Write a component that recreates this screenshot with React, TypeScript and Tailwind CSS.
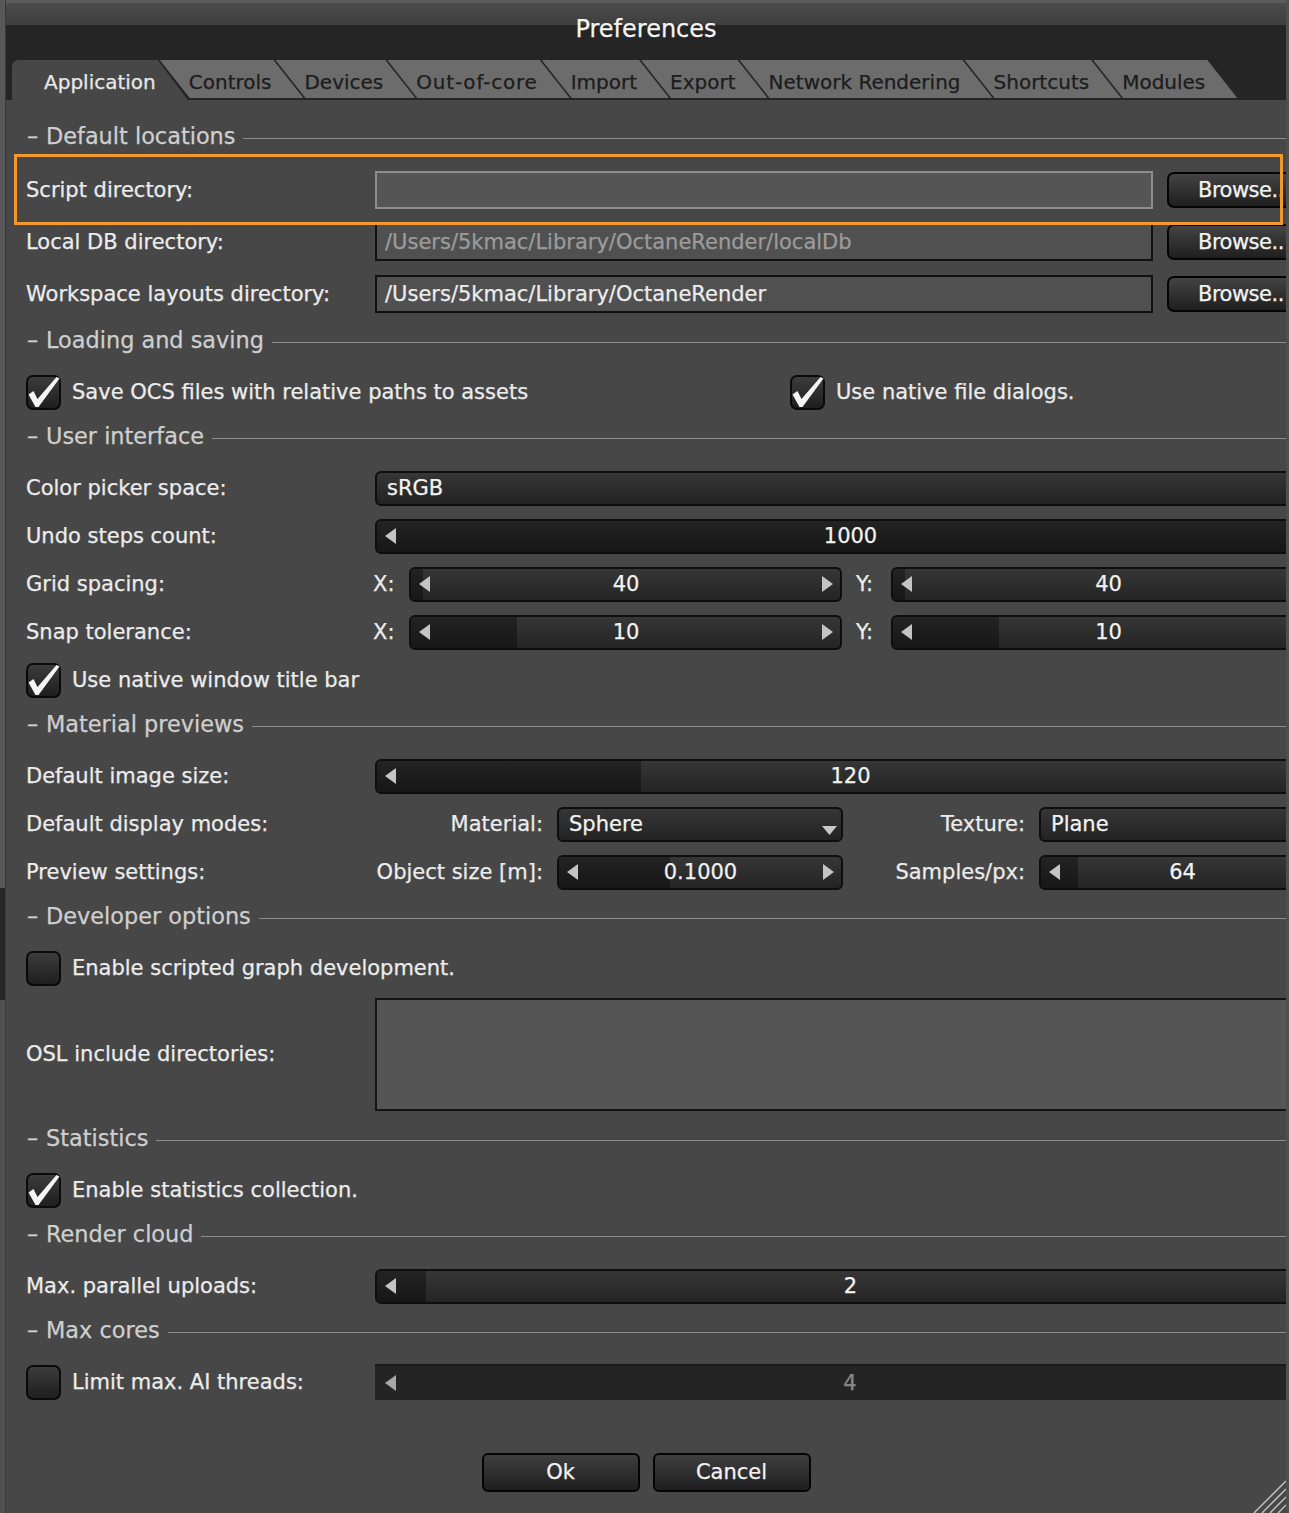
import React from 'react'

const tabs = ['Application', 'Controls', 'Devices', 'Out-of-core', 'Import', 'Export', 'Network Rendering', 'Shortcuts', 'Modules']

function LeftArrow({ dim = false }: { dim?: boolean }) {
  return (
    <svg width="11" height="16" viewBox="0 0 11 16" className={dim ? 'shrink-0 fill-[#a8a8a8]' : 'shrink-0 fill-[#c4c4c4]'}>
      <polygon points="11,0 0,8 11,16" />
    </svg>
  )
}

function RightArrow() {
  return (
    <svg width="11" height="16" viewBox="0 0 11 16" className="shrink-0 fill-[#c4c4c4]">
      <polygon points="0,0 11,8 0,16" />
    </svg>
  )
}

function Slider({ value, fill, w }: { value: string; fill: number; w: string }) {
  return (
    <div className={`relative ${w} h-[35px] shrink-0 overflow-hidden rounded-[6px] border-2 border-[#0e0e0e] bg-linear-to-b from-[#373737] to-[#242424]`}>
      <div className="absolute inset-y-0 left-0 bg-linear-to-b from-[#232323] to-[#171717]" style={{ width: `${fill * 100}%` }} />
      <div className="relative flex h-full items-center pl-[8px] pr-[7px]">
        <LeftArrow />
        <span className="flex-1 text-center text-[#f2f2f2]">{value}</span>
        <RightArrow />
      </div>
    </div>
  )
}

function Dropdown({ value, w, arrow = false }: { value: string; w: string; arrow?: boolean }) {
  return (
    <div className={`relative ${w} h-[35px] shrink-0 rounded-[6px] border-2 border-[#0e0e0e] bg-linear-to-b from-[#363636] to-[#232323] pl-[10px] flex items-center text-[#f2f2f2]`}>
      {value}
      {arrow && (
        <svg width="15" height="9" viewBox="0 0 15 9" className="absolute bottom-[5px] right-[4px] fill-[#c8c8c8]">
          <polygon points="0,0 15,0 7.5,9" />
        </svg>
      )}
    </div>
  )
}

function Checkbox({ checked, label }: { checked: boolean; label: string }) {
  return (
    <div className="flex items-center">
      <div className="relative h-[35px] w-[35px] shrink-0 rounded-[7px] border-2 border-[#0a0a0a] bg-linear-to-b from-[#3c3c3c] to-[#1f1f1f]">
        {checked && (
          <svg width="35" height="35" viewBox="0 0 35 35" className="absolute -left-[2px] -top-[2px] overflow-visible fill-[#f4f4f4]">
            <path d="M2.5 19.5 L7.5 16 L11.5 24 L30.5 2 L33.5 3.5 L12.5 32 L9.5 32 Z" />
          </svg>
        )}
      </div>
      <span className="ml-[11px] text-[#ececec]">{label}</span>
    </div>
  )
}

function Section({ title }: { title: string }) {
  return (
    <div className="flex h-[40px] items-center text-[22.4px] text-[#cfcfcf]">
      <span className="w-[20px] pl-[1px]">–</span>
      <span>{title}</span>
      <div className="ml-[8px] mt-[4px] h-px flex-1 bg-[#8c8c8c]" />
    </div>
  )
}

function Row({ label, h = 'h-[48px]', children }: { label: string; h?: string; children?: React.ReactNode }) {
  return (
    <div className={`flex ${h} items-center`}>
      <div className="w-[349px] shrink-0 text-[#ececec]">{label}</div>
      {children}
    </div>
  )
}

function PathBox({ text, tone }: { text: string; tone: 'focus' | 'dim' | 'bright' }) {
  const cls =
    tone === 'focus'
      ? 'border-[#8e8e8e] bg-[#555555] text-[#ececec]'
      : tone === 'dim'
        ? 'border-[#111111] bg-[#505050] text-[#9c9c9c]'
        : 'border-[#111111] bg-[#505050] text-[#ececec]'
  return <div className={`flex h-[38px] w-[778px] shrink-0 items-center border-2 pl-[8px] ${cls}`}>{text}</div>
}

function BrowseButton() {
  return (
    <div className="ml-[14px] flex h-[36px] w-[158px] shrink-0 items-center rounded-[7px] border-2 border-[#050505] bg-linear-to-b from-[#444444] to-[#1f1f1f] pl-[29px] tracking-[-0.5px] text-[#f2f2f2]">
      Browse..
    </div>
  )
}

function PushButton({ label }: { label: string }) {
  return (
    <div className="flex h-[39px] w-[158px] items-center justify-center rounded-[6px] border-2 border-[#050505] bg-linear-to-b from-[#3f3f3f] to-[#1f1f1f] text-[#f2f2f2]">
      {label}
    </div>
  )
}

export default function App() {
  return (
    <div className="flex h-[1513px] w-[1289px] overflow-hidden bg-[#474747] font-['DejaVu_Sans',sans-serif] text-[21px] leading-none [-webkit-text-stroke:0.25px]">
      {/* window behind, left edge */}
      <div className="flex w-[6px] shrink-0 flex-col border-r border-[#3a3a3a]">
        <div className="h-[888px] bg-[#585858]" />
        <div className="h-[112px] bg-[#262626]" />
        <div className="flex-1 bg-[#505050]" />
      </div>

      <div className="relative w-[1280px] shrink-0 overflow-hidden">
        {/* title bar + tabs */}
        <div className="h-[100px] bg-[linear-gradient(to_bottom,#5c5c5c_0px,#5c5c5c_3px,#4c4c4c_3px,#3e3e3e_25px,#252525_25px)]">
          <div className="h-[60px] pt-[15px] text-center text-[24px] leading-[28px] text-[#f4f4f4]">Preferences</div>
          <div className="flex h-[40px] items-start pl-[6px] text-[20px]">
            {tabs.map((t, i) =>
              i === 0 ? (
                <div
                  key={t}
                  className="flex h-[40px] items-center rounded-tl-[6px] bg-[#474747] pl-[32px] pr-[32px] pt-[4px] text-[#e8e8e8] [clip-path:polygon(0_0,calc(100%-30px)_0,100%_100%,0_100%)]"
                >
                  {t}
                </div>
              ) : (
                <div
                  key={t}
                  className={`-ml-[28px] flex h-[38px] items-center bg-[#6c6c6c] pl-[29px] pr-[32px] pt-[5px] text-[#1c1c1c] [clip-path:polygon(0_0,calc(100%-30px)_0,100%_100%,30px_100%)] ${t === 'Out-of-core' ? 'tracking-[0.8px]' : ''}`}
                >
                  {t}
                </div>
              )
            )}
          </div>
        </div>

        {/* preferences body */}
        <div className="w-[1319px] pl-[20px] pt-[16px]">
          <div className="w-[1299px]">
            <Section title="Default locations" />
            <div className="mt-[8px]">
              <Row label="Script directory:" h="h-[52px]">
                <PathBox text="" tone="focus" />
                <BrowseButton />
              </Row>
              <Row label="Local DB directory:" h="h-[52px]">
                <PathBox text="/Users/5kmac/Library/OctaneRender/localDb" tone="dim" />
                <BrowseButton />
              </Row>
              <Row label="Workspace layouts directory:" h="h-[52px]">
                <PathBox text="/Users/5kmac/Library/OctaneRender" tone="bright" />
                <BrowseButton />
              </Row>
            </div>

            <Section title="Loading and saving" />
            <div className="mt-[8px] flex h-[48px] items-center">
              <div className="w-[764px] shrink-0">
                <Checkbox checked label="Save OCS files with relative paths to assets" />
              </div>
              <Checkbox checked label="Use native file dialogs." />
            </div>

            <Section title="User interface" />
            <div className="mt-[8px]">
              <Row label="Color picker space:">
                <Dropdown value="sRGB" w="w-[950px]" arrow />
              </Row>
              <Row label="Undo steps count:">
                <Slider value="1000" fill={1} w="w-[950px]" />
              </Row>
              <Row label="Grid spacing:">
                <span className="-ml-[2px] w-[36px] shrink-0 text-[#ececec]">X:</span>
                <Slider value="40" fill={0.028} w="w-[433px]" />
                <span className="ml-[14px] w-[35px] shrink-0 text-[#ececec]">Y:</span>
                <Slider value="40" fill={0.028} w="w-[434px]" />
              </Row>
              <Row label="Snap tolerance:">
                <span className="-ml-[2px] w-[36px] shrink-0 text-[#ececec]">X:</span>
                <Slider value="10" fill={0.247} w="w-[433px]" />
                <span className="ml-[14px] w-[35px] shrink-0 text-[#ececec]">Y:</span>
                <Slider value="10" fill={0.247} w="w-[434px]" />
              </Row>
              <div className="flex h-[48px] items-center">
                <Checkbox checked label="Use native window title bar" />
              </div>
            </div>

            <Section title="Material previews" />
            <div className="mt-[8px]">
              <Row label="Default image size:">
                <Slider value="120" fill={0.279} w="w-[950px]" />
              </Row>
              <Row label="Default display modes:">
                <span className="w-[168px] shrink-0 text-right text-[#ececec]">Material:</span>
                <div className="w-[14px] shrink-0" />
                <Dropdown value="Sphere" w="w-[286px]" arrow />
                <span className="w-[182px] shrink-0 text-right text-[#ececec]">Texture:</span>
                <div className="w-[14px] shrink-0" />
                <Dropdown value="Plane" w="w-[286px]" arrow />
              </Row>
              <Row label="Preview settings:">
                <span className="w-[168px] shrink-0 text-right text-[#ececec]">Object size [m]:</span>
                <div className="w-[14px] shrink-0" />
                <Slider value="0.1000" fill={0.395} w="w-[286px]" />
                <span className="w-[182px] shrink-0 text-right text-[#ececec]">Samples/px:</span>
                <div className="w-[14px] shrink-0" />
                <Slider value="64" fill={0.13} w="w-[286px]" />
              </Row>
            </div>

            <Section title="Developer options" />
            <div className="mt-[8px] flex h-[48px] items-center">
              <Checkbox checked={false} label="Enable scripted graph development." />
            </div>
            <div className="mt-[6px] flex items-center">
              <div className="w-[349px] shrink-0 text-[#ececec]">OSL include directories:</div>
              <div className="h-[113px] w-[950px] shrink-0 border-2 border-[#141414] bg-[#555555]" />
            </div>

            <div className="mt-[7px]">
              <Section title="Statistics" />
            </div>
            <div className="mt-[8px] flex h-[48px] items-center">
              <Checkbox checked label="Enable statistics collection." />
            </div>

            <Section title="Render cloud" />
            <div className="mt-[8px]">
              <Row label="Max. parallel uploads:">
                <Slider value="2" fill={0.052} w="w-[950px]" />
              </Row>
            </div>

            <Section title="Max cores" />
            <div className="mt-[8px] flex h-[48px] items-center">
              <div className="w-[349px] shrink-0">
                <Checkbox checked={false} label="Limit max. AI threads:" />
              </div>
              <div className="flex h-[36px] w-[950px] shrink-0 items-center border-t-2 border-[#1a1a1a] bg-[#242424] pl-[10px] pr-[10px]">
                <LeftArrow dim />
                <span className="flex-1 text-center text-[#8a8a8a]">4</span>
                <div className="w-[11px]" />
              </div>
            </div>
          </div>
        </div>

        <div className="mt-[47px] flex justify-center gap-[13px]">
          <PushButton label="Ok" />
          <PushButton label="Cancel" />
        </div>

        {/* highlight around the script directory row */}
        <div className="pointer-events-none absolute left-[8px] top-[154px] h-[71px] w-[1269px] border-[3px] border-[#f2992e]" />

        {/* resize grip */}
        <svg width="38" height="36" viewBox="0 0 38 36" className="absolute bottom-0 right-0 stroke-[#c6c6c6]" strokeWidth="1.4">
          <path d="M38 4 L6 36 M38 12 L14 36 M38 20 L22 36 M38 28 L30 36" />
        </svg>
      </div>

      <div className="w-[3px] shrink-0 bg-[#4f4f4f]" />
    </div>
  )
}
